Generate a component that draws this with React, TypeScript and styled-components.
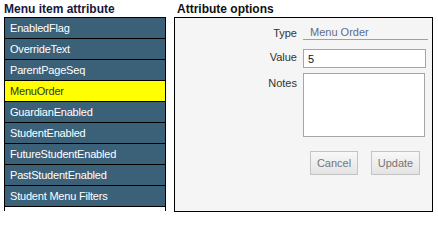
import React from "react";
import styled, { createGlobalStyle } from "styled-components";

const GlobalStyle = createGlobalStyle`
  html, body {
    margin: 0;
    padding: 0;
    background: #ffffff;
    font-family: "Liberation Sans", Arial, sans-serif;
  }
  * { box-sizing: border-box; }
`;

const Page = styled.div`
  display: flex;
  align-items: flex-start;
  gap: 8px;
  padding: 0 4px;
`;

const Column = styled.section<{ $width: number }>`
  display: flex;
  flex-direction: column;
  width: ${(p) => p.$width}px;
`;

const Heading = styled.h2<{ $color: string; $indent: number }>`
  margin: 0;
  height: 17px;
  padding: 1px 0 0 ${(p) => p.$indent}px;
  font-size: 12px;
  font-weight: bold;
  line-height: 16px;
  color: ${(p) => p.$color};
  white-space: nowrap;
`;

const List = styled.ul`
  margin: 0;
  padding: 0 0 4px;
  list-style: none;
  border: 1px solid #000;
  border-bottom: none;
  background: #ffffff;
`;

const ListItem = styled.li<{ $selected?: boolean }>`
  height: 21px;
  padding-left: 5px;
  border-bottom: 1px solid #000;
  background: ${(p) => (p.$selected ? "#ffff00" : "#3b6179")};
  color: ${(p) => (p.$selected ? "#333333" : "#ffffff")};
  font-size: 11px;
  line-height: 20px;
  letter-spacing: -0.2px;
  white-space: nowrap;
`;

const Panel = styled.div`
  height: 195px;
  border: 1px solid #000;
  background: #f5f5f5;
  padding-top: 7px;
`;

const FieldRow = styled.div<{ $top: number }>`
  display: grid;
  grid-template-columns: 122px 125px;
  column-gap: 6px;
  align-items: start;
  margin-top: ${(p) => p.$top}px;
`;

const Label = styled.label<{ $pad: number }>`
  padding-top: ${(p) => p.$pad}px;
  text-align: right;
  font-size: 11px;
  line-height: 14px;
  color: #333333;
`;

const TypeValue = styled.div`
  height: 15px;
  padding-left: 7px;
  border-bottom: 1px solid #a0a0a0;
  font-size: 11px;
  line-height: 14px;
  color: #5d6d8c;
`;

const TextInput = styled.input`
  width: 123px;
  height: 19px;
  margin: 0;
  padding: 0 4px;
  border: 1px solid #a6a6a6;
  background: #ffffff;
  font-family: "Liberation Sans", Arial, sans-serif;
  font-size: 11px;
  color: #111;
  outline: none;
`;

const NotesArea = styled.textarea`
  display: block;
  width: 122px;
  height: 64px;
  margin: 0;
  padding: 2px 4px;
  border: 1px solid #a6a6a6;
  background: #ffffff;
  font-family: "Liberation Sans", Arial, sans-serif;
  font-size: 11px;
  resize: none;
  outline: none;
`;

const ButtonRow = styled.div`
  grid-column: 2;
  display: flex;
  gap: 13px;
  padding-left: 7px;
`;

const Button = styled.button<{ $width: number }>`
  width: ${(p) => p.$width}px;
  height: 24px;
  margin: 0;
  padding: 0;
  border: 1px solid #c4c4c4;
  background: linear-gradient(#f8f8f8, #e4e4e4);
  color: #757575;
  font-family: "Liberation Sans", Arial, sans-serif;
  font-size: 11px;
  cursor: default;
`;

const items = [
  "EnabledFlag",
  "OverrideText",
  "ParentPageSeq",
  "MenuOrder",
  "GuardianEnabled",
  "StudentEnabled",
  "FutureStudentEnabled",
  "PastStudentEnabled",
  "Student Menu Filters",
];

export default function App() {
  return (
    <>
      <GlobalStyle />
      <Page>
        <Column $width={162}>
          <Heading $color="#17173c" $indent={0}>Menu item attribute</Heading>
          <List>
            {items.map((it) => (
              <ListItem key={it} $selected={it === "MenuOrder"}>
                {it}
              </ListItem>
            ))}
          </List>
        </Column>
        <Column $width={259}>
          <Heading $color="#111111" $indent={3}>Attribute options</Heading>
          <Panel>
            <FieldRow $top={0}>
              <Label $pad={1}>Type</Label>
              <TypeValue>Menu Order</TypeValue>
            </FieldRow>
            <FieldRow $top={9}>
              <Label $pad={1}>Value</Label>
              <TextInput defaultValue="5" />
            </FieldRow>
            <FieldRow $top={5}>
              <Label $pad={3}>Notes</Label>
              <NotesArea />
            </FieldRow>
            <FieldRow $top={14}>
              <ButtonRow>
                <Button $width={48}>Cancel</Button>
                <Button $width={49}>Update</Button>
              </ButtonRow>
            </FieldRow>
          </Panel>
        </Column>
      </Page>
    </>
  );
}
